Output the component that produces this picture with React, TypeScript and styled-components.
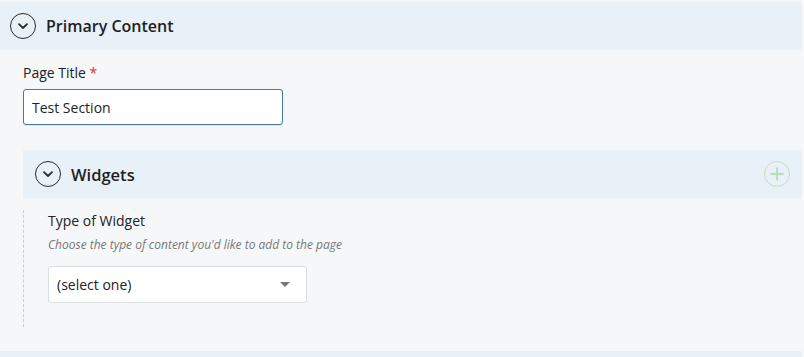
import styled, { createGlobalStyle } from 'styled-components'

const GlobalStyle = createGlobalStyle`
  html, body {
    margin: 0;
    padding: 0;
    background: #f5f7f9;
  }
  body {
    font-family: 'Open Sans', 'Liberation Sans', sans-serif;
    color: #222;
  }
`

const Page = styled.div`
  width: 804px;
  height: 357px;
  overflow: hidden;
  box-sizing: border-box;
  padding: 2px 2px 0 0;
  background: #f5f7f9;
`
const Header = styled.div<{ $indent: number }>`
  display: flex;
  align-items: center;
  height: 48px;
  padding-left: ${p => p.$indent}px;
  padding-right: 12px;
  background: #e8f0f8;
  border-radius: 0 3px 3px 0;
  box-sizing: border-box;
`
const Toggle = styled.button`
  display: flex;
  align-items: center;
  justify-content: center;
  width: 26px;
  height: 26px;
  padding: 0;
  border: 1.5px solid #2b2b2b;
  border-radius: 50%;
  background: transparent;
  color: #2b2b2b;
  cursor: pointer;
  flex: none;
`
const Title = styled.h2<{ $size: number }>`
  margin: 0 0 0 10px;
  font-size: ${p => p.$size}px;
  font-weight: 600;
  color: #1f1f1f;
  flex: 1;
`
const AddButton = styled.button`
  display: flex;
  align-items: center;
  justify-content: center;
  width: 26px;
  height: 26px;
  padding: 0;
  border: 1.5px solid #bfe3c1;
  border-radius: 50%;
  background: transparent;
  cursor: pointer;
`
const Body = styled.div`
  padding: 13px 0 24px 23px;
`
const Label = styled.label`
  display: block;
  font-size: 14px;
  line-height: 20px;
  color: #222;
  margin-bottom: 6px;
  span {
    color: #e0302a;
  }
`
const TextInput = styled.input`
  display: block;
  width: 260px;
  height: 36px;
  box-sizing: border-box;
  padding: 0 8px;
  font-family: inherit;
  font-size: 14px;
  color: #222;
  background: #fff;
  border: 1px solid #4a76a5;
  border-radius: 3px;
  box-shadow: 0 1px 1px rgba(0, 0, 0, 0.08);
  outline: none;
`
const Nested = styled.div`
  margin-top: 25px;
`
const NestedBody = styled.div`
  margin: 12px 0 0 0;
  padding: 1px 0 24px 24px;
  border-left: 1px dashed #c9ccd0;
`
const Help = styled.p`
  margin: 5px 0 12px;
  font-size: 12px;
  font-style: italic;
  line-height: 18px;
  color: #777;
`
const Select = styled.div`
  display: flex;
  align-items: center;
  justify-content: space-between;
  width: 259px;
  height: 37px;
  box-sizing: border-box;
  padding: 0 16px 0 8px;
  background: #fff;
  border: 1px solid #dcdfe2;
  border-radius: 3px;
  font-size: 14px;
  color: #222;
`
const Caret = styled.span`
  width: 0;
  height: 0;
  border-left: 5px solid transparent;
  border-right: 5px solid transparent;
  border-top: 5px solid #777;
`
const NextHeader = styled.div`
  height: 8px;
  background: #e8f0f8;
`

const Chevron = () => (
  <svg width="12" height="12" viewBox="0 0 12 12" fill="none">
    <path d="M2 4.2 L6 8 L10 4.2" stroke="currentColor" strokeWidth="1.8" strokeLinecap="round" strokeLinejoin="round" />
  </svg>
)

const Plus = () => (
  <svg width="16" height="16" viewBox="0 0 16 16" fill="none">
    <path d="M8 1.5 V14.5 M1.5 8 H14.5" stroke="#b5deb8" strokeWidth="1.8" />
  </svg>
)

const App = () => {
  return (
    <Page>
      <GlobalStyle />
      <Header $indent={10}>
        <Toggle aria-label="Collapse"><Chevron /></Toggle>
        <Title $size={16}>Primary Content</Title>
      </Header>
      <Body>
        <Label>Page Title <span>*</span></Label>
        <TextInput defaultValue="Test Section" />
        <Nested>
          <Header $indent={12}>
            <Toggle aria-label="Collapse"><Chevron /></Toggle>
            <Title $size={16.5}>Widgets</Title>
            <AddButton aria-label="Add widget"><Plus /></AddButton>
          </Header>
          <NestedBody>
            <Label style={{ marginBottom: 0 }}>Type of Widget</Label>
            <Help>Choose the type of content you'd like to add to the page</Help>
            <Select>
              (select one)
              <Caret />
            </Select>
          </NestedBody>
        </Nested>
      </Body>
      <NextHeader />
    </Page>
  )
}

export default App
